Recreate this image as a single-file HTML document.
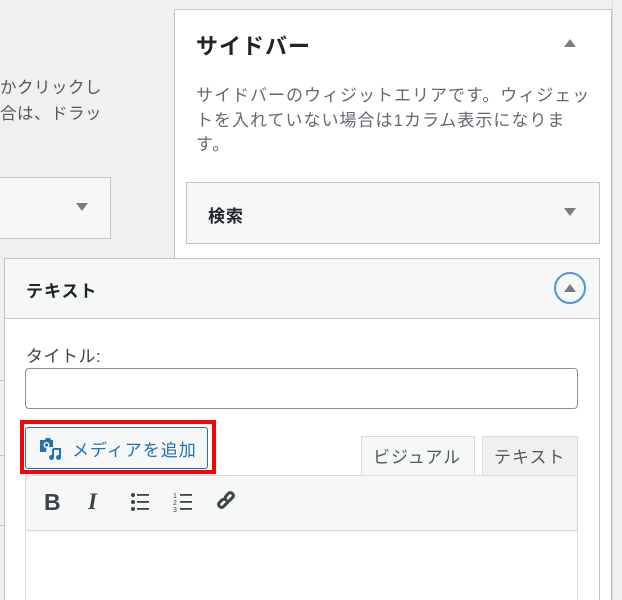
<!DOCTYPE html>
<html><head><meta charset="utf-8"><style>
*{box-sizing:border-box;margin:0;padding:0}
html,body{width:622px;height:600px;overflow:hidden}
body{background:#f0f0f1;font-family:"Liberation Sans","Noto Sans CJK JP",sans-serif;position:relative;color:#1d2327;letter-spacing:1px}
.a{position:absolute;white-space:nowrap}
.tri-d{width:0;height:0;border-left:6px solid transparent;border-right:6px solid transparent;border-top:8px solid #787c82}
.tri-u{width:0;height:0;border-left:6px solid transparent;border-right:6px solid transparent;border-bottom:8px solid #787c82}
</style></head><body>
<div class="a" style="left:0;top:75px;font-size:16.5px;color:#50575e;line-height:26px;letter-spacing:0.5px">かクリックし<br>合は、ドラッ</div>
<div class="a" style="left:-2px;top:177px;width:113px;height:62px;background:#f6f7f7;border:1px solid #c3c4c7"></div>
<div class="a tri-d" style="left:76px;top:203px"></div>
<div class="a" style="left:0;top:380px;width:6px;height:1px;background:#c3c4c7"></div>
<div class="a" style="left:0;top:455px;width:6px;height:1px;background:#c3c4c7"></div>
<div class="a" style="left:0;top:525px;width:6px;height:1px;background:#c3c4c7"></div>

<div class="a" style="left:174px;top:9px;width:438px;height:600px;background:#fff;border:1px solid #c3c4c7"></div>
<div class="a" style="left:612px;top:0;width:10px;height:600px;background:#f0f0f1;border-left:1px solid #dcdcde"></div>
<div class="a" style="left:196px;top:32px;font-size:22px;font-weight:bold;line-height:30px;letter-spacing:1px">サイドバー</div>
<div class="a tri-u" style="left:564px;top:39px"></div>
<div class="a" style="left:196px;top:84px;width:400px;font-size:17px;color:#646970;line-height:24.5px;white-space:normal">サイドバーのウィジットエリアです。ウィジェットを入れていない場合は1カラム表示になります。</div>
<div class="a" style="left:186px;top:182px;width:414px;height:62px;background:#f6f7f7;border:1px solid #c3c4c7"></div>
<div class="a" style="left:208px;top:202px;font-size:17px;font-weight:bold">検索</div>
<div class="a tri-d" style="left:564px;top:208px"></div>

<div class="a" style="left:4px;top:258px;width:596px;height:350px;background:#fff;border:1px solid #c3c4c7"></div>
<div class="a" style="left:5px;top:259px;width:594px;height:60px;background:#f6f7f7;border-bottom:1px solid #c3c4c7"></div>
<div class="a" style="left:26px;top:277px;font-size:17px;font-weight:bold">テキスト</div>
<div class="a" style="left:554px;top:272px;width:32px;height:32px;border:2px solid #4f94d4;border-radius:50%"></div>
<div class="a tri-u" style="left:564px;top:284px"></div>

<div class="a" style="left:26px;top:342px;font-size:17px;color:#3c434a;letter-spacing:0.5px">タイトル:</div>
<div class="a" style="left:25px;top:368px;width:553px;height:41px;border:1px solid #8c8f94;border-radius:4px"></div>
<div class="a" style="left:20px;top:420px;width:196px;height:54px;border:4px solid #f00"></div>
<div class="a" style="left:25px;top:427px;width:183px;height:42px;border:1px solid #2271b1;border-radius:3px;background:#f6f7f7"></div>
<svg class="a" style="left:38px;top:437px" width="24" height="24" viewBox="0 0 24 24"><path d="M2 3h5l1-2h4l1 2h2v7h-4a4 4 0 0 0-3 3v2H2z" fill="#2271b1"/><circle cx="8.5" cy="8" r="3" fill="#f6f7f7"/><circle cx="8.5" cy="8" r="1.6" fill="#2271b1"/><path d="M15 12h7v9" stroke="#2271b1" stroke-width="2" fill="none"/><path d="M15 12v8" stroke="#2271b1" stroke-width="2"/><circle cx="13.5" cy="20.5" r="2.5" fill="#2271b1"/><circle cx="20.5" cy="20.5" r="2.5" fill="#2271b1"/></svg>
<div class="a" style="left:72px;top:436px;font-size:17px;color:#2271b1">メディアを追加</div>

<div class="a" style="left:361px;top:436px;width:114px;height:40px;background:#f6f7f7;border:1px solid #dcdcde;border-bottom:none"></div>
<div class="a" style="left:373px;top:443px;font-size:17px;color:#50575e">ビジュアル</div>
<div class="a" style="left:482px;top:436px;width:96px;height:40px;background:#f0f0f1;border:1px solid #dcdcde;border-bottom:none"></div>
<div class="a" style="left:494px;top:443px;font-size:17px;color:#50575e">テキスト</div>
<div class="a" style="left:25px;top:475px;width:553px;height:140px;border:1px solid #dcdcde;background:#fff"></div>
<div class="a" style="left:26px;top:476px;width:551px;height:55px;background:#f6f7f7;border-bottom:1px solid #dcdcde;box-shadow:0 1px 2px rgba(0,0,0,.08)"></div>
<div class="a" style="left:44px;top:489px;font-size:23px;font-weight:bold;color:#3c434a;letter-spacing:0">B</div>
<div class="a" style="left:88px;top:489px;font-size:23px;font-weight:bold;font-style:italic;font-family:'Liberation Serif',serif;color:#3c434a;letter-spacing:0">I</div>
<svg class="a" style="left:130px;top:492px" width="22" height="20" viewBox="0 0 22 20"><g fill="#3c434a"><circle cx="3" cy="3" r="2"/><circle cx="3" cy="10" r="2"/><circle cx="3" cy="17" r="2"/><rect x="7" y="2" width="12" height="1.8"/><rect x="7" y="9" width="12" height="1.8"/><rect x="7" y="16" width="12" height="1.8"/></g></svg>
<svg class="a" style="left:173px;top:491px" width="22" height="22" viewBox="0 0 22 22"><g fill="#3c434a"><text x="0" y="7" font-size="7" font-family="Liberation Sans">1</text><text x="0" y="14" font-size="7" font-family="Liberation Sans">2</text><text x="0" y="21" font-size="7" font-family="Liberation Sans">3</text><rect x="7" y="3" width="12" height="1.8"/><rect x="7" y="10" width="12" height="1.8"/><rect x="7" y="17" width="12" height="1.8"/></g></svg>
<svg class="a" style="left:216px;top:490px" width="24" height="24" viewBox="0 0 24 24"><g fill="none" stroke="#3c434a" stroke-width="3" stroke-linecap="round"><path d="M10 14l-3 3a3 3 0 0 1-4-4l3-3a3 3 0 0 1 4 0"/><path d="M14 10l3-3a3 3 0 0 0-4-4l-3 3a3 3 0 0 0 0 4"/><path d="M9 15l6-6"/></g></svg>
</body></html>
